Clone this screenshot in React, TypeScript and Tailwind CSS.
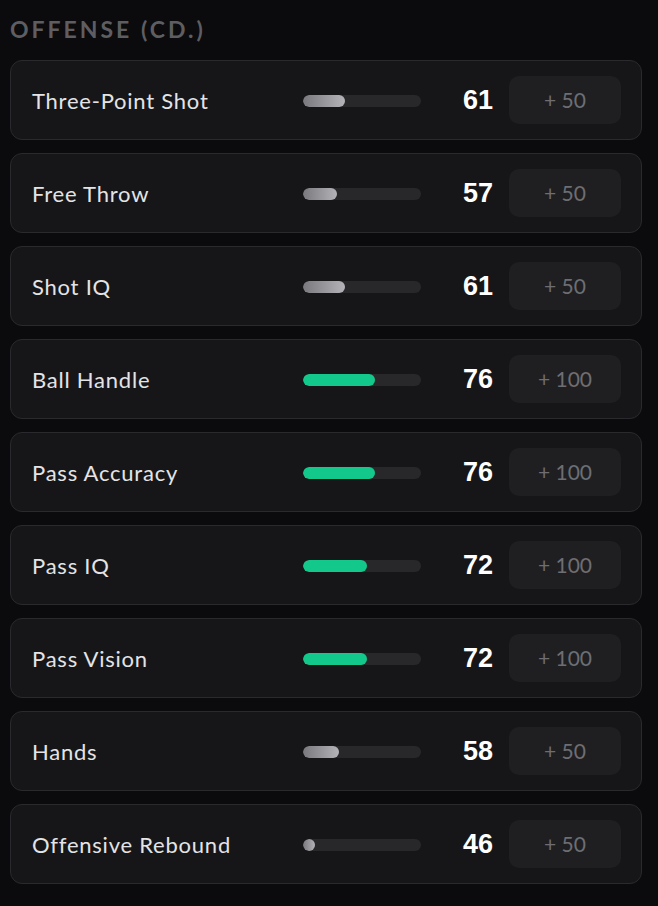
import React from 'react';

interface Attribute {
  name: string;
  value: number;
  cost: number;
}

const ATTRIBUTES: Attribute[] = [
  { name: 'Three-Point Shot', value: 61, cost: 50 },
  { name: 'Free Throw', value: 57, cost: 50 },
  { name: 'Shot IQ', value: 61, cost: 50 },
  { name: 'Ball Handle', value: 76, cost: 100 },
  { name: 'Pass Accuracy', value: 76, cost: 100 },
  { name: 'Pass IQ', value: 72, cost: 100 },
  { name: 'Pass Vision', value: 72, cost: 100 },
  { name: 'Hands', value: 58, cost: 50 },
  { name: 'Offensive Rebound', value: 46, cost: 50 },
];

const AttributeRow: React.FC<{ attr: Attribute }> = ({ attr }) => {
  // bar is 118px wide, fill grows 2px per point above 40
  const fill = Math.max(12, Math.min(118, (attr.value - 40) * 2));
  const high = attr.value >= 70;

  return (
    <div className="h-[80px] rounded-[12px] border border-[#2a2a2e] bg-[#161618] flex items-center pl-[21px] pr-[20px]">
      <span className="flex-1 text-[22px] text-[#e4e4e6] font-['Lato',sans-serif] tracking-[0.035em]">{attr.name}</span>
      <div className="w-[118px] h-[12px] rounded-full bg-[#28282b] overflow-hidden mt-[2px]">
        <div
          className={
            high
              ? 'h-full rounded-full bg-[#12c98b]'
              : 'h-full rounded-full bg-gradient-to-r from-[#7a7a7e] to-[#b4b4b8]'
          }
          style={{ width: fill }}
        />
      </div>
      <span className="w-[72px] text-right text-[27px] font-bold text-white font-['Liberation_Sans',sans-serif]">
        {attr.value}
      </span>
      <button className="ml-[16px] w-[112px] h-[48px] rounded-[10px] bg-[#1f1f22] text-[21px] text-[#6e6e72] font-['Lato',sans-serif]">
        + {attr.cost}
      </button>
    </div>
  );
};

export default function App() {
  return (
    <div className="min-h-[906px] w-[658px] bg-[#0b0b0d] pl-[10px] pr-[16px] pt-[16px] pb-[20px]">
      <h2 className="text-[23px] font-bold tracking-[0.13em] text-[#5e5e62] font-['Lato',sans-serif] leading-[26px]">
        OFFENSE (CD.)
      </h2>
      <div className="mt-[18px] flex flex-col gap-[13px]">
        {ATTRIBUTES.map((a) => (
          <AttributeRow key={a.name} attr={a} />
        ))}
      </div>
    </div>
  );
}
